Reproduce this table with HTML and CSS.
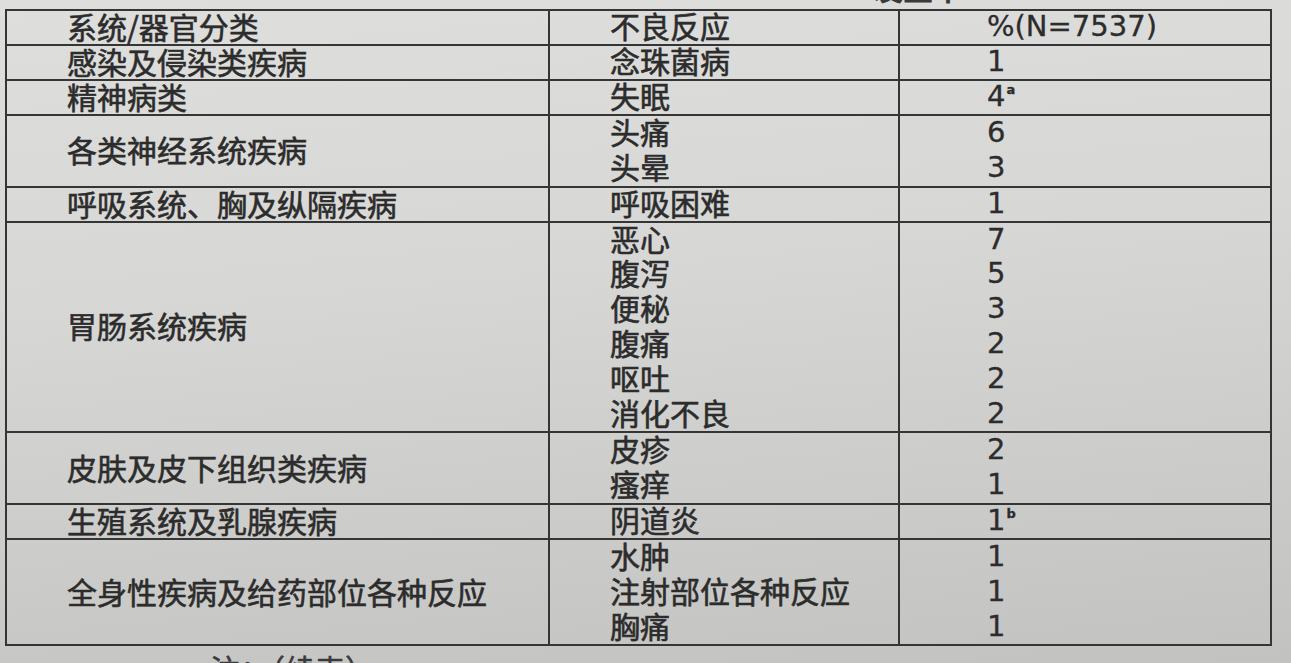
FILE: index.html
```html
<!DOCTYPE html>
<html lang="zh-CN">
<head>
<meta charset="utf-8">
<title>不良反应</title>
<link rel="stylesheet" href="styles.css">
</head>
<body>
<div class="page">
  <div class="cut-title"><span>发生率</span></div>
  <table class="ae-table">
    <colgroup>
      <col class="c1"><col class="c2"><col class="c3">
    </colgroup>
    <tr class="one">
      <td class="soc">系统/器官分类</td>
      <td class="ae"><div>不良反应</div></td>
      <td class="pct"><div>%(N=7537)</div></td>
    </tr>
    <tr class="one">
      <td class="soc">感染及侵染类疾病</td>
      <td class="ae"><div>念珠菌病</div></td>
      <td class="pct"><div>1</div></td>
    </tr>
    <tr class="one">
      <td class="soc">精神病类</td>
      <td class="ae"><div>失眠</div></td>
      <td class="pct"><div>4<sup>a</sup></div></td>
    </tr>
    <tr>
      <td class="soc">各类神经系统疾病</td>
      <td class="ae"><div>头痛</div><div>头晕</div></td>
      <td class="pct"><div>6</div><div>3</div></td>
    </tr>
    <tr class="one">
      <td class="soc">呼吸系统、胸及纵隔疾病</td>
      <td class="ae"><div>呼吸困难</div></td>
      <td class="pct"><div>1</div></td>
    </tr>
    <tr>
      <td class="soc">胃肠系统疾病</td>
      <td class="ae"><div>恶心</div><div>腹泻</div><div>便秘</div><div>腹痛</div><div>呕吐</div><div>消化不良</div></td>
      <td class="pct"><div>7</div><div>5</div><div>3</div><div>2</div><div>2</div><div>2</div></td>
    </tr>
    <tr>
      <td class="soc">皮肤及皮下组织类疾病</td>
      <td class="ae"><div>皮疹</div><div>瘙痒</div></td>
      <td class="pct"><div>2</div><div>1</div></td>
    </tr>
    <tr class="one">
      <td class="soc">生殖系统及乳腺疾病</td>
      <td class="ae"><div>阴道炎</div></td>
      <td class="pct"><div>1<sup>b</sup></div></td>
    </tr>
    <tr>
      <td class="soc">全身性疾病及给药部位各种反应</td>
      <td class="ae"><div>水肿</div><div>注射部位各种反应</div><div>胸痛</div></td>
      <td class="pct"><div>1</div><div>1</div><div>1</div></td>
    </tr>
  </table>
  <div class="foot">注：（续表）</div>
</div>
</body>
</html>
```

FILE: styles.css
```css
html, body {
  margin: 0;
  padding: 0;
}
body {
  width: 1291px;
  height: 663px;
  overflow: hidden;
  background: linear-gradient(175deg, #dededc 0%, #d7d7d5 40%, #cbcbc9 75%, #c2c2c0 100%);
  color: #2c2c2c;
  font-family: "Noto Sans CJK SC", "Noto Sans", sans-serif;
}
.page {
  padding-left: 5px;
}
.cut-title {
  height: 6px;
  overflow: hidden;
  display: flex;
  align-items: flex-end;
  padding-left: 868px;
}
.cut-title span {
  font-size: 30px;
  line-height: 30px;
  font-weight: 700;
  color: #3a3a3a;
  margin-bottom: 4px;
  flex: none;
}
.ae-table {
  border-collapse: collapse;
  width: 1265px;
  margin-top: 3px;
  table-layout: fixed;
}
.c1 { width: 543px; }
.c2 { width: 350px; }
.c3 { width: 372px; }
.ae-table td {
  border: 2px solid #353535;
  padding: 0;
  font-size: 30px;
  font-weight: 400;
  -webkit-text-stroke: 0.6px #2c2c2c;
  vertical-align: middle;
  line-height: 30px;
  padding-bottom: 3px;
}
.ae-table td.ae,
.ae-table td.pct {
  padding-bottom: 0;
}
.ae-table td.soc {
  padding-left: 60px;
}
.ae-table td.ae {
  padding-left: 60px;
}
.ae-table td.pct {
  padding-left: 87px;
  font-family: "DejaVu Sans", "Noto Sans", sans-serif;
  font-size: 29px;
  -webkit-text-stroke: 0.3px #2c2c2c;
}
.ae-table td.ae div,
.ae-table td.pct div {
  box-sizing: border-box;
  height: 34.8px;
  line-height: 30.8px;
  padding-bottom: 4px;
  white-space: nowrap;
}
.ae-table tr.one td.ae div,
.ae-table tr.one td.pct div {
  height: 33px;
  line-height: 29px;
}
.ae-table td.pct div {
  line-height: 32px;
  padding-bottom: 2.8px;
}
.ae-table tr.one td.pct div {
  line-height: 31px;
  padding-bottom: 2px;
}
.ae-table sup {
  font-size: 13px;
  font-weight: 700;
  line-height: 0;
  vertical-align: 12px;
  margin-left: 1px;
}
.foot {
  margin-top: 5px;
  padding-left: 205px;
  font-size: 30px;
  line-height: 34px;
  font-weight: 400;
  -webkit-text-stroke: 0.5px #3a3a3a;
  color: #3a3a3a;
}
```
